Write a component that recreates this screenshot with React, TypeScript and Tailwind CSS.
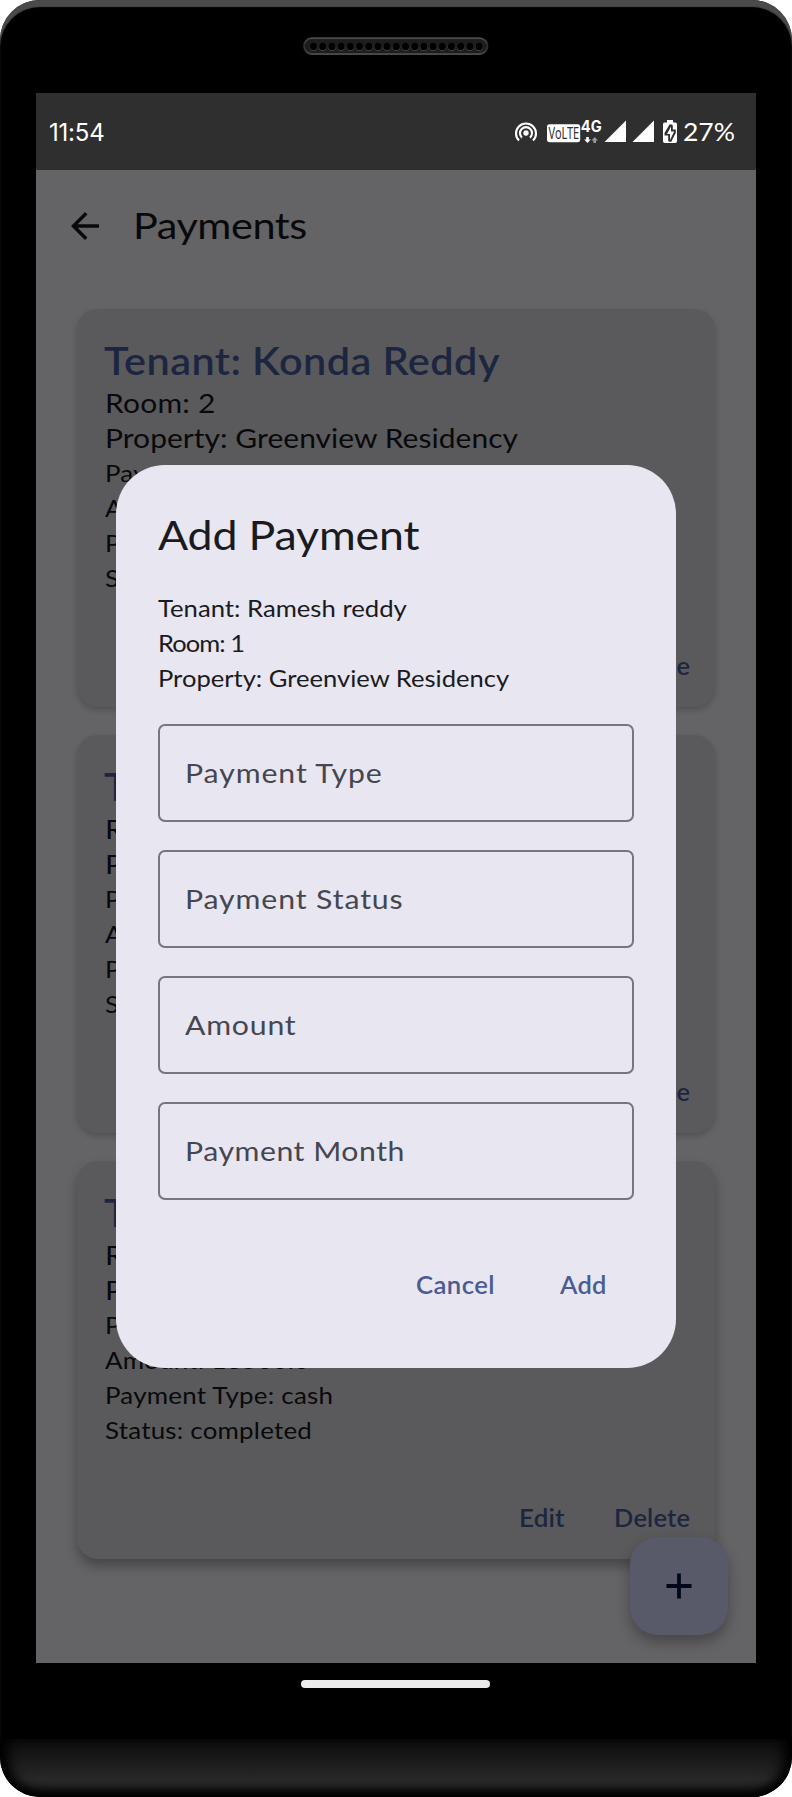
import type { ReactNode } from "react";

type TextProps = { className: string; children: ReactNode };

function Text({ className, children }: TextProps) {
  return (
    <span className={`block w-fit origin-left whitespace-nowrap ${className}`}>
      {children}
    </span>
  );
}

const speakerHoles = Array.from({ length: 19 }, (_, i) => 10.5 + i * 9.2);

function Speaker() {
  return (
    <svg width="186" height="19" viewBox="0 0 186 19">
      <defs>
        <linearGradient id="rim" x1="0" y1="0" x2="0" y2="1">
          <stop offset="0" stopColor="#4c4c4c" />
          <stop offset="0.5" stopColor="#2b2b2b" />
          <stop offset="1" stopColor="#484848" />
        </linearGradient>
      </defs>
      <rect x="1" y="1.2" width="183.5" height="15.8" rx="7.9" fill="#1d1d1d" stroke="url(#rim)" strokeWidth="1.8" />
      {speakerHoles.map((x) => (
        <g key={x}>
          <circle cx={x} cy="10" r="3.9" fill="#454545" />
          <circle cx={x} cy="9.4" r="3.6" fill="#000" />
        </g>
      ))}
    </svg>
  );
}

function StatusIcons() {
  return (
    <svg width="165" height="28" viewBox="514 118 165 28" fill="none">
      <g stroke="#fff" strokeWidth="2.1">
        <path d="M519 140.6A10 10 0 1 1 533 140.6" />
        <path d="M522 137.6A6 6 0 1 1 530 137.6" />
      </g>
      <circle cx="526" cy="133" r="2.7" fill="#fff" />
      <rect x="547" y="124.3" width="33.2" height="17.9" rx="2.6" fill="#fff" />
      <text x="548.6" y="139.2" fontSize="16.5" textLength="30.6" lengthAdjust="spacingAndGlyphs" fill="#2f2f2f" fontFamily="Noto Sans, sans-serif">
        VoLTE
      </text>
      <text x="580.8" y="132" fontSize="15.5" fontWeight="700" textLength="20.8" lengthAdjust="spacingAndGlyphs" fill="#fff" fontFamily="Inter, sans-serif">
        4G
      </text>
      <path d="M586.2 137h2.6v2.4h2l-3.3 3.6-3.3-3.6h2z" fill="#fff" />
      <path d="M593.4 143h2.6v-2.6h2l-3.3-3.4-3.3 3.4h2z" fill="#999" />
      <path d="M604.5 142L626 120.5V142zM632.5 142L654 120.5V142z" fill="#fff" />
      <path d="M667 120h6v2.4h2.3q1.7 0 1.7 1.7v17.2q0 1.7-1.7 1.7h-10.6q-1.7 0-1.7-1.7v-17.2q0-1.7 1.7-1.7H667z" fill="#fff" />
      <path d="M669.5 124.5h2.8l.5 1.5v3.5h3v3.2l-4.5 9h-2.6l-.5-1.5v-4.7h-3.7v-2.5z" fill="#2f2f2f" />
      <path d="M671 126.5v5h3.2l-4.2 8.5v-6h-3z" fill="#fff" />
    </svg>
  );
}

function StatusBar() {
  return (
    <div className="flex h-[77px] items-center justify-between bg-[#2f2f2f] pl-[13px] text-white">
      <span className="pt-[2px] font-['Inter',sans-serif] text-[24px]/[35px] tracking-[-0.2px]">11:54</span>
      <div className="flex w-[242px] items-center gap-[4px]">
        <StatusIcons />
        <Text className="scale-x-[1.06] text-[25px]/[35px]">27%</Text>
      </div>
    </div>
  );
}

function AppBar() {
  return (
    <div className="flex h-[111px] items-center pl-[28px] text-[#09090b]">
      <svg width="42" height="42" viewBox="0 0 24 24" fill="currentColor">
        <path d="M20 11H7.83l5.59-5.59L12 4l-8 8 8 8 1.41-1.41L7.83 13H20v-2z" />
      </svg>
      <Text className="-mt-[2px] ml-[27px] scale-x-[1.12] text-[37px]/[49px] tracking-[-0.4px]">Payments</Text>
    </div>
  );
}

type Payment = {
  tenant: string;
  room: string;
  month: string;
  amount: string;
  shadow: string;
};

const payments: Payment[] = [
  { tenant: "Konda Reddy", room: "2", month: "2025-03", amount: "5000.0", shadow: "shadow-[0_3px_6px_rgba(0,0,0,0.2)]" },
  { tenant: "Ramesh reddy", room: "1", month: "2025-03", amount: "5000.0", shadow: "shadow-[0_3px_6px_rgba(0,0,0,0.2)]" },
  { tenant: "Ramesh reddy", room: "1", month: "2025-03", amount: "13500.0", shadow: "shadow-[0_7px_12px_rgba(0,0,0,0.3)]" },
];

function PaymentCard({ tenant, room, month, amount, shadow }: Payment) {
  return (
    <article className={`h-[398px] rounded-[21px] bg-[#5a5a5c] pl-[28px] pt-[27px] text-[#09090b] ${shadow}`}>
      <Text className="-ml-[1px] scale-x-[1.09] text-[38px]/[49px] font-semibold tracking-[0.4px] text-[#1d2640]">Tenant: {tenant}</Text>
      <Text className="scale-x-[1.09] text-[27.5px]/[35px] tracking-[0.2px]">Room: {room}</Text>
      <Text className="scale-x-[1.09] text-[27.5px]/[35px] tracking-[0.04px]">Property: Greenview Residency</Text>
      <Text className="scale-x-[1.08] text-[24px]/[35px] tracking-[0.2px]">Payment Month: {month}</Text>
      <Text className="scale-x-[1.08] text-[24px]/[35px] tracking-[0.2px]">Amount: {amount}</Text>
      <Text className="scale-x-[1.08] text-[24px]/[35px] tracking-[0.2px]">Payment Type: cash</Text>
      <Text className="scale-x-[1.08] text-[24px]/[35px] tracking-[0.2px]">Status: completed</Text>
      <div className="mt-[53px] flex pl-[414px] text-[24px]/[35px] font-semibold text-[#1d2640]">
        <Text className="mr-[53px] scale-x-[1.08] tracking-[0.2px]">Edit</Text>
        <Text className="scale-x-[1.06] tracking-[0.2px]">Delete</Text>
      </div>
    </article>
  );
}

const fields = [
  { label: "Payment Type", tracking: "tracking-[0.82px]" },
  { label: "Payment Status", tracking: "tracking-[0.8px]" },
  { label: "Amount", tracking: "tracking-[0.7px]" },
  { label: "Payment Month", tracking: "tracking-[0.47px]" },
];

function AddPaymentDialog() {
  return (
    <section
      role="dialog"
      className="absolute left-[116px] top-[465px] h-[903px] w-[560px] rounded-[49px] bg-[#e8e6f0] px-[42px] pt-[42px] text-[#1a1b21]"
    >
      <Text className="scale-x-[1.09] text-[41px]/[56px] tracking-[-0.15px]">Add Payment</Text>
      <div className="mt-[27px] text-[24px]/[35px]">
        <Text className="scale-x-[1.07]">Tenant: Ramesh reddy</Text>
        <Text className="scale-x-[1.06] tracking-[-0.87px]">Room: 1</Text>
        <Text className="scale-x-[1.065]">Property: Greenview Residency</Text>
      </div>
      <div className="mt-[29px] flex flex-col gap-[28px]">
        {fields.map(({ label, tracking }) => (
          <div key={label} className="flex h-[98px] items-center rounded-[7px] border-2 border-[#757680] pb-[2px] pl-[25px] text-[#45464f]">
            <Text className={`scale-x-[1.1] text-[27.5px]/[35px] ${tracking}`}>{label}</Text>
          </div>
        ))}
      </div>
      <div className="mt-[67px] flex pl-[258px] text-[24px]/[35px] font-semibold text-[#4a5c92]">
        <Text className="mr-[70px] scale-x-[1.07] tracking-[0.4px]">Cancel</Text>
        <Text className="scale-x-[1.06] tracking-[0.2px]">Add</Text>
      </div>
    </section>
  );
}

function AddButton() {
  return (
    <button className="absolute left-[630px] top-[1537px] flex size-[98px] items-center justify-center rounded-[28px] bg-[#585a69] shadow-[0_7px_14px_rgba(0,0,0,0.3)]">
      <svg width="26" height="26" viewBox="0 0 26 26">
        <path d="M13 0.5v25M0.5 13h25" stroke="#00091c" strokeWidth="3.8" />
      </svg>
    </button>
  );
}

export default function App() {
  return (
    <div className="h-[1797px] w-[792px] bg-white font-['Lato',sans-serif]">
      <div className="relative flex h-[1797px] w-[792px] flex-col overflow-hidden rounded-[40px] bg-black shadow-[inset_0_7px_1px_#4a4a4a]">
        <div className="flex h-[93px] shrink-0 justify-center pt-[37px]">
          <Speaker />
        </div>
        <main className="mx-[36px] flex h-[1570px] shrink-0 flex-col bg-[#646466]">
          <StatusBar />
          <AppBar />
          <div className="flex flex-col gap-[28px] px-[41px] pt-[28px]">
            {payments.map((payment, i) => (
              <PaymentCard key={i} {...payment} />
            ))}
          </div>
        </main>
        <div className="flex h-[76px] shrink-0 justify-center pr-[2px] pt-[17px]">
          <div className="h-[8px] w-[189px] rounded-full bg-[#ebebeb]" />
        </div>
        <div className="h-[58px] shrink-0 rounded-b-[40px] bg-linear-to-b from-[#0c0c0c] from-0% via-[#282828] via-70% to-[#1c1c1c] to-100% shadow-[inset_14px_0_14px_-6px_#000,inset_-14px_0_14px_-6px_#000,inset_0_-8px_10px_-2px_#000]" />
        <AddButton />
        <AddPaymentDialog />
      </div>
    </div>
  );
}
